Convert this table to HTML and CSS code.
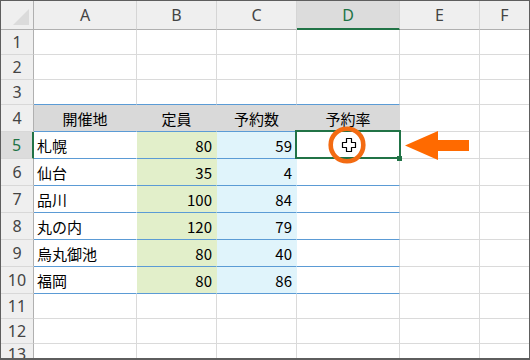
FILE: index.html
```html
<!DOCTYPE html>
<html lang="ja">
<head>
<meta charset="utf-8">
<link rel="stylesheet" href="styles.css">
</head>
<body>
<div class="sheet">
  <div class="corner"><span class="tri"></span></div>
  <div class="ch">A</div><div class="ch">B</div><div class="ch">C</div><div class="ch sel">D</div><div class="ch">E</div><div class="ch last">F</div>

  <div class="rh">1</div><div class="c"></div><div class="c"></div><div class="c"></div><div class="c"></div><div class="c"></div><div class="c last"></div>
  <div class="rh">2</div><div class="c"></div><div class="c"></div><div class="c"></div><div class="c"></div><div class="c"></div><div class="c last"></div>
  <div class="rh">3</div><div class="c tt"></div><div class="c tt"></div><div class="c tt"></div><div class="c tt"></div><div class="c"></div><div class="c last"></div>

  <div class="rh">4</div><div class="t th">開催地</div><div class="t th">定員</div><div class="t th">予約数</div><div class="t th d">予約率</div><div class="c"></div><div class="c last"></div>

  <div class="rh rsel">5</div><div class="t name">札幌</div><div class="t num g">80</div><div class="t num b">59</div>
  <div class="t d active">
    <span class="selbox"></span><span class="handle"></span>
    <svg class="ring" width="40" height="40" viewBox="0 0 40 40"><circle cx="20" cy="20" r="16.3" fill="none" stroke="#f36b12" stroke-width="4.6"/></svg>
    <svg class="cursor" width="16" height="16" viewBox="0 0 16 16"><polygon points="5.5,1.5 10.5,1.5 10.5,5.5 14.5,5.5 14.5,10.5 10.5,10.5 10.5,14.5 5.5,14.5 5.5,10.5 1.5,10.5 1.5,5.5 5.5,5.5" fill="#fff" stroke="#000" stroke-width="1.2" stroke-linejoin="round"/></svg>
  </div>
  <div class="c"></div><div class="c last"></div>

  <div class="rh">6</div><div class="t name">仙台</div><div class="t num g">35</div><div class="t num b">4</div><div class="t d"></div><div class="c"></div><div class="c last"></div>
  <div class="rh">7</div><div class="t name">品川</div><div class="t num g">100</div><div class="t num b">84</div><div class="t d"></div><div class="c"></div><div class="c last"></div>
  <div class="rh">8</div><div class="t name">丸の内</div><div class="t num g">120</div><div class="t num b">79</div><div class="t d"></div><div class="c"></div><div class="c last"></div>
  <div class="rh">9</div><div class="t name">烏丸御池</div><div class="t num g">80</div><div class="t num b">40</div><div class="t d"></div><div class="c"></div><div class="c last"></div>
  <div class="rh">10</div><div class="t name">福岡</div><div class="t num g">80</div><div class="t num b">86</div><div class="t d"></div><div class="c"></div><div class="c last"></div>

  <div class="rh">11</div><div class="c"></div><div class="c"></div><div class="c"></div><div class="c"></div><div class="c"></div><div class="c last"></div>
  <div class="rh">12</div><div class="c"></div><div class="c"></div><div class="c"></div><div class="c"></div><div class="c"></div><div class="c last"></div>
  <div class="rh cut">13</div><div class="c nb"></div><div class="c nb"></div><div class="c nb"></div><div class="c nb"></div><div class="c nb"></div><div class="c nb last"></div>

  <svg class="arrow" width="70" height="34" viewBox="0 0 70 34"><polygon points="1,16.5 34,2 34,11 65,11 65,22 34,22 34,31" fill="#ff6a00"/></svg>
</div>
</body>
</html>
```

FILE: styles.css
```css
* { box-sizing: border-box; }

body {
  margin: 0;
  background: #fff;
}

.sheet {
  position: relative;
  width: 530px;
  height: 360px;
  border: 1px solid #5e5e5e;
  border-bottom-width: 2px;
  display: grid;
  grid-template-columns: 33px 103px 80px 80px 103px 80px 49px;
  grid-template-rows: 29px 25px 25px 25px repeat(7, 27px) 25px 25px 14px;
  font-family: "Noto Sans CJK JP", sans-serif;
  font-size: 15px;
  color: #000;
  overflow: hidden;
}

.corner {
  background: #efefef;
  border-right: 1px solid #b0b0b0;
  border-bottom: 1px solid #b0b0b0;
  display: flex;
  justify-content: flex-end;
  align-items: flex-end;
  padding: 0 4px 4px 0;
}

.tri {
  width: 16px;
  height: 16px;
  background: #dbdbdb;
  clip-path: polygon(100% 0, 100% 100%, 0 100%);
}

.ch {
  background: #efefef;
  border-right: 1px solid #d5d5d5;
  border-bottom: 1px solid #b0b0b0;
  display: flex;
  align-items: center;
  justify-content: center;
  color: #444;
  font-family: "Noto Sans", sans-serif;
  font-size: 16px;
}

.ch.sel {
  background: #dcdcdc;
  color: #217346;
  border-bottom: 2px solid #217346;
}

.rh {
  background: #efefef;
  border-right: 1px solid #b0b0b0;
  border-bottom: 1px solid #d8d8d8;
  display: flex;
  align-items: center;
  justify-content: center;
  color: #444;
  font-family: "Noto Sans", sans-serif;
  font-size: 16px;
}

.rh.rsel {
  background: #dcdcdc;
  color: #217346;
  border-right: 2px solid #217346;
}

.rh.cut {
  align-items: flex-start;
  border-bottom: none;
  line-height: 20px;
}

.c {
  border-right: 1px solid #dadada;
  border-bottom: 1px solid #dadada;
}

.c.tt { border-bottom-color: #5b9bd5; }
.c.nb { border-bottom: none; }
.last { border-right: none; }

.t {
  display: flex;
  align-items: center;
  border-right: 1px solid transparent;
  border-bottom: 1px solid #5b9bd5;
  background: #fff;
}

.t.th {
  background: #d9d9d9;
  justify-content: center;
}

.t.d { border-right-color: #dadada; }
.t.th.d { border-right-color: #d9d9d9; }

.t.name { padding-left: 3px; }

.t.num {
  justify-content: flex-end;
  padding-right: 4px;
}

.t.g { background: #e2efca; }
.t.b { background: #e0f4fb; }

.active { position: relative; }

.selbox {
  position: absolute;
  left: -2px;
  top: -2px;
  width: 106px;
  height: 29px;
  border: 2px solid #217346;
}

.handle {
  position: absolute;
  left: 100px;
  top: 24px;
  width: 5px;
  height: 5px;
  background: #217346;
}

.ring {
  position: absolute;
  left: 30px;
  top: -7px;
}

.cursor {
  position: absolute;
  left: 44px;
  top: 5px;
}

.arrow {
  position: absolute;
  left: 403px;
  top: 128px;
}
```
